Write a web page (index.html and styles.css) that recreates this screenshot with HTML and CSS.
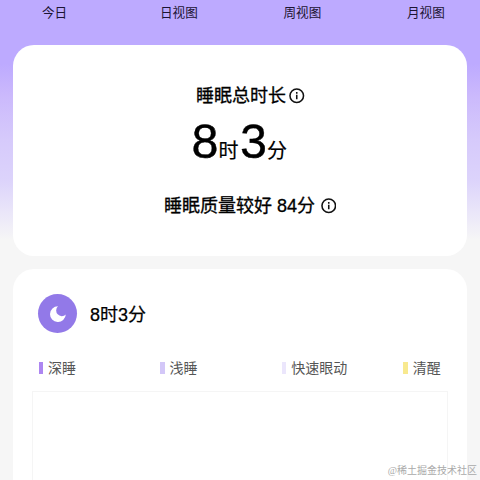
FILE: index.html
```html
<!DOCTYPE html>
<html lang="zh-CN">
<head>
<meta charset="utf-8">
<title>睡眠</title>
<link rel="stylesheet" href="styles.css">
</head>
<body>
<nav class="tabs"><span>今日</span><span>日视图</span><span>周视图</span><span>月视图</span></nav>
<main class="content">
  <section class="card summary">
    <div class="line title"><span>睡眠总时长</span>
      <svg class="info" viewBox="0 0 16 16"><circle cx="8" cy="8" r="7"/><path d="M8 7v4.6M8 4.1v1.8"/></svg>
    </div>
    <div class="duration"><b>8</b><span>时</span><b>3</b><span>分</span></div>
    <div class="line quality"><span>睡眠质量较好 84分</span>
      <svg class="info" viewBox="0 0 16 16"><circle cx="8" cy="8" r="7"/><path d="M8 7v4.6M8 4.1v1.8"/></svg>
    </div>
  </section>
  <section class="card detail">
    <div class="total">
      <span class="moon"><svg viewBox="0 0 16 16"><path d="M8 .2A7.9 7.9 0 1 0 15.8 8.6A5 5 0 0 1 8 .2Z"/></svg></span>
      <span class="hours">8时3分</span>
    </div>
    <div class="legend">
      <span class="deep">深睡</span><span class="light">浅睡</span><span class="rem">快速眼动</span><span class="awake">清醒</span>
    </div>
    <div class="chart"></div>
  </section>
</main>
<div class="watermark">@稀土掘金技术社区</div>
</body>
</html>
```
FILE: styles.css
```css
* { box-sizing: border-box; }
body {
  margin: 0;
  height: 480px;
  overflow: hidden;
  position: relative;
  background: linear-gradient(#bdaaff 0, #bdaaff 64px, #cbb9fc 95px, #d6cafb 140px, #dcd3fb 180px, #eae6f9 212px, #f6f6f6 240px);
  font-family: "Liberation Sans", "Noto Sans CJK SC", sans-serif;
  color: #000;
}
.tabs {
  display: grid;
  grid-template-columns: 118px 123.5px 123.5px 73px;
  padding: 4px 0 0 42px;
  width: 480px;
  height: 44.5px;
  font-size: 12.6px;
  line-height: 19px;
  color: #1c1433;
}
.content { padding: 0 13px; }
.card { background: #fff; border-radius: 21px; }
.summary {
  height: 211.5px;
  padding: 38.5px 0 0;
}
.line {
  display: flex;
  align-items: center;
  height: 26px;
  font-size: 18px;
  -webkit-text-stroke: 0.3px #000;
  line-height: 26px;
}
.title { padding-left: 183px; gap: 3px; }
.quality { padding-left: 151px; gap: 5.5px; margin-top: 27px; }
.info {
  width: 15.5px;
  height: 15.5px;
  fill: none;
  stroke: #111;
  stroke-width: 1.6;
}
.duration {
  display: flex;
  align-items: baseline;
  height: 57px;
  padding-left: 178.5px;
  line-height: 64px;
  font-size: 20px;
}
.duration b { font-size: 48.5px; font-weight: 400; -webkit-text-stroke: 0.4px #000; }
.duration span { width: 21.5px; -webkit-text-stroke: 0.2px #000; }
.detail {
  height: 211px;
  margin-top: 13px;
  padding: 25px 19px 0;
  border-radius: 21px 21px 0 0;
}
.total {
  display: flex;
  align-items: center;
  height: 39px;
  gap: 13px;
  padding-left: 6px;
  font-size: 18px;
  -webkit-text-stroke: 0.25px #000;
}
.hours { padding-bottom: 2px; }
.moon {
  display: flex;
  align-items: center;
  justify-content: center;
  width: 39px;
  height: 39px;
  border-radius: 50%;
  background: #9279e8;
}
.moon svg { width: 16px; height: 16px; fill: #fff; }
.legend {
  display: grid;
  grid-template-columns: 121.6px 121.6px 121.6px 1fr;
  height: 20px;
  margin: 25px 0 0 6.5px;
  font-size: 14px;
  line-height: 20px;
  color: #555;
}
.legend span { display: flex; align-items: center; gap: 5px; white-space: nowrap; }
.legend span::before { content: ""; width: 4.5px; height: 12px; background: var(--stage); }
.deep { --stage: #ad86f1; }
.light { --stage: #d3c7f8; }
.rem { --stage: #ebe6fc; }
.awake { --stage: #f8e98f; }
.chart {
  width: 416px;
  height: 89px;
  margin-top: 13px;
  border: 1px solid #f5f5f5;
  border-bottom: 0;
}
.watermark {
  position: absolute;
  right: 3px;
  bottom: 1px;
  font-family: "Liberation Serif", "Noto Sans CJK SC", serif;
  font-size: 10px;
  line-height: 16px;
  color: #aaa;
}
```
